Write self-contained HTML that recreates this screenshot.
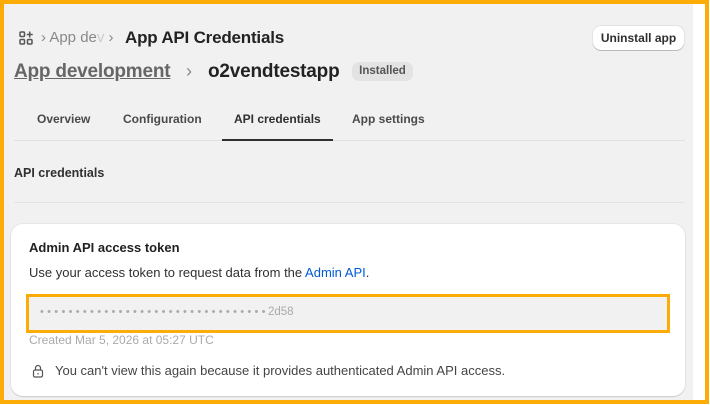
<!DOCTYPE html>
<html><head><meta charset="utf-8"><style>
*{margin:0;padding:0;box-sizing:border-box}
body{width:710px;height:405px;overflow:hidden;background:#fff;font-family:"Liberation Sans",sans-serif;position:relative;color:#303030}
.frame{position:absolute;left:0;top:0;width:709px;height:404px;border:4px solid #fdac07}
.bg{position:absolute;left:4px;top:4px;width:689px;height:396px;background:#f1f1f1}
.a{position:absolute;white-space:nowrap}
.btn{position:absolute;left:593px;top:26px;width:91px;height:24px;background:#fff;border-radius:8px;box-shadow:0 1px 0 #bbb,0 0 0 1px #e3e3e3;font-size:12px;font-weight:bold;color:#303030;text-align:center;line-height:24px}
.tab{position:absolute;top:112px;font-size:12px;font-weight:bold;color:#4a4a4a}
.card{position:absolute;left:11px;top:224px;width:674px;height:172px;background:#fff;border-radius:12px;box-shadow:0 1px 1px #ccc,0 0 0 1px #e6e6e6}
</style></head><body>
<div class="bg"></div>
<svg class="a" style="left:18px;top:30px" width="16" height="16" viewBox="0 0 16 16" fill="none" stroke="#555" stroke-width="1.5"><rect x="2" y="2" width="4.5" height="4.5" rx="1"/><rect x="2" y="9.5" width="4.5" height="4.5" rx="1"/><rect x="9.5" y="9.5" width="4.5" height="4.5" rx="1"/><path d="M11.7 1.5v6M8.7 4.5h6"/></svg>
<div class="a" style="left:41px;top:29px;font-size:15px;color:#888">› App de<span style="color:#ccc">v</span> ›</div>
<div class="a" style="left:125px;top:28px;font-size:17px;font-weight:bold;color:#222;letter-spacing:-0.2px">App API Credentials</div>
<div class="btn">Uninstall app</div>
<div class="a" style="left:14px;top:61px;font-size:19px;font-weight:bold;color:#666;text-decoration:underline;letter-spacing:-0.2px">App development</div>
<div class="a" style="left:186px;top:61px;font-size:18px;color:#888">›</div>
<div class="a" style="left:208px;top:61px;font-size:19px;font-weight:bold;color:#222;letter-spacing:-0.2px">o2vendtestapp</div>
<div class="a" style="left:352px;top:62px;width:61px;height:19px;border-radius:7px;background:#e3e3e3;font-size:11.5px;font-weight:bold;color:#555;text-align:center;line-height:19px">Installed</div>
<div class="tab" style="left:37px">Overview</div>
<div class="tab" style="left:123px">Configuration</div>
<div class="tab" style="left:234px;color:#303030">API credentials</div>
<div class="tab" style="left:352px">App settings</div>
<div class="a" style="left:14px;top:140px;width:671px;height:1px;background:#e0e0e0"></div>
<div class="a" style="left:222px;top:139px;width:111px;height:2px;background:#303030"></div>
<div class="a" style="left:14px;top:166px;font-size:12.5px;font-weight:bold">API credentials</div>
<div class="a" style="left:14px;top:202px;width:671px;height:1px;background:#e3e3e3"></div>
<div class="card"></div>
<div class="a" style="left:29px;top:240px;font-size:13px;font-weight:bold;color:#222">Admin API access token</div>
<div class="a" style="left:29px;top:265px;font-size:13px;color:#303030">Use your access token to request data from the <span style="color:#005bd3">Admin API</span>.</div>
<div class="a" style="left:26px;top:294px;width:644px;height:39px;border:3px solid #fdac07;background:#f1f1f1"></div>
<div class="a" style="left:40px;top:306px;font-size:11px;color:#aaa;letter-spacing:3.3px">••••••••••••••••••••••••••••••••</div>
<div class="a" style="left:268px;top:306px;font-size:11.5px;color:#aaa">2d58</div>
<div class="a" style="left:29px;top:333px;font-size:12px;color:#aaa">Created Mar 5, 2026 at 05:27 UTC</div>
<svg class="a" style="left:32px;top:364px" width="12" height="14" viewBox="0 0 12 14" fill="none" stroke="#555" stroke-width="1.2"><rect x="1.5" y="6" width="9" height="7" rx="1.5"/><path d="M3.5 6V4a2.5 2.5 0 0 1 5 0v2M6 9v1.5"/></svg>
<div class="a" style="left:55px;top:363px;font-size:13px;color:#444">You can't view this again because it provides authenticated Admin API access.</div>
<div class="frame"></div>
</body></html>
